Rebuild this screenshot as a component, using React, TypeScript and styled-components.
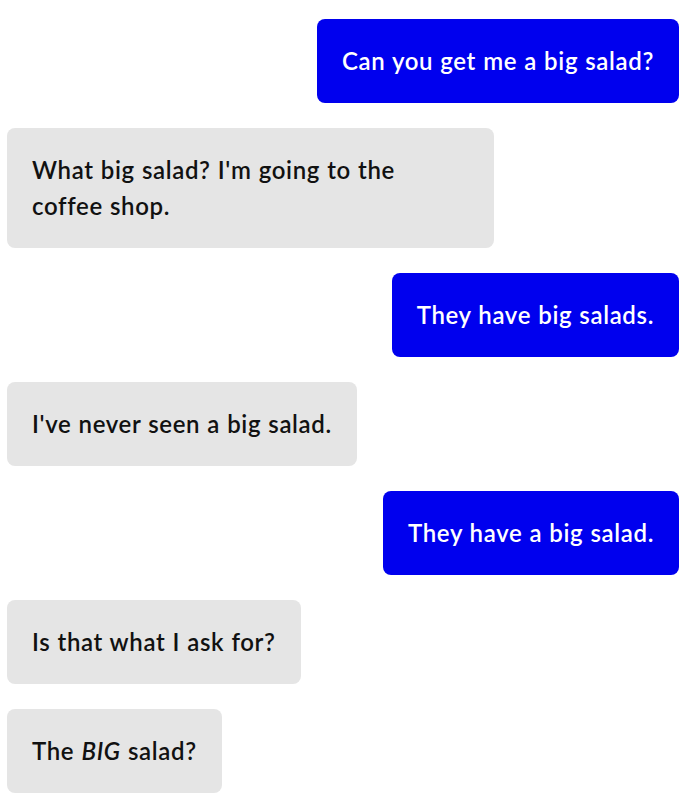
import React from "react";
import styled, { createGlobalStyle } from "styled-components";

const Global = createGlobalStyle`
  html, body { margin: 0; padding: 0; background: #ffffff; }
  body { font-family: "Lato", "Noto Sans", sans-serif; }
`;

const Thread = styled.div`
  display: flex;
  flex-direction: column;
  gap: 25px;
  padding: 19px 5px 8px 7px;
`;

const Bubble = styled.div<{ $mine?: boolean }>`
  box-sizing: border-box;
  align-self: ${(p) => (p.$mine ? "flex-end" : "flex-start")};
  max-width: 487px;
  padding: 24px 25px;
  border-radius: 8px;
  background: ${(p) => (p.$mine ? "#0000ee" : "#e5e5e5")};
  color: ${(p) => (p.$mine ? "#ffffff" : "#111111")};
  font-size: 24px;
  line-height: 36px;
  font-weight: 600;
  letter-spacing: 0.65px;
  word-spacing: 0.5px;
  em { font-style: italic; }
`;

const messages: { mine: boolean; text: React.ReactNode }[] = [
  { mine: true, text: "Can you get me a big salad?" },
  { mine: false, text: "What big salad? I'm going to the coffee shop." },
  { mine: true, text: "They have big salads." },
  { mine: false, text: "I've never seen a big salad." },
  { mine: true, text: "They have a big salad." },
  { mine: false, text: "Is that what I ask for?" },
  { mine: false, text: <>The <em>BIG</em> salad?</> },
];

export default function App() {
  return (
    <>
      <Global />
      <Thread>
        {messages.map((m, i) => (
          <Bubble key={i} $mine={m.mine}>
            {m.text}
          </Bubble>
        ))}
      </Thread>
    </>
  );
}
